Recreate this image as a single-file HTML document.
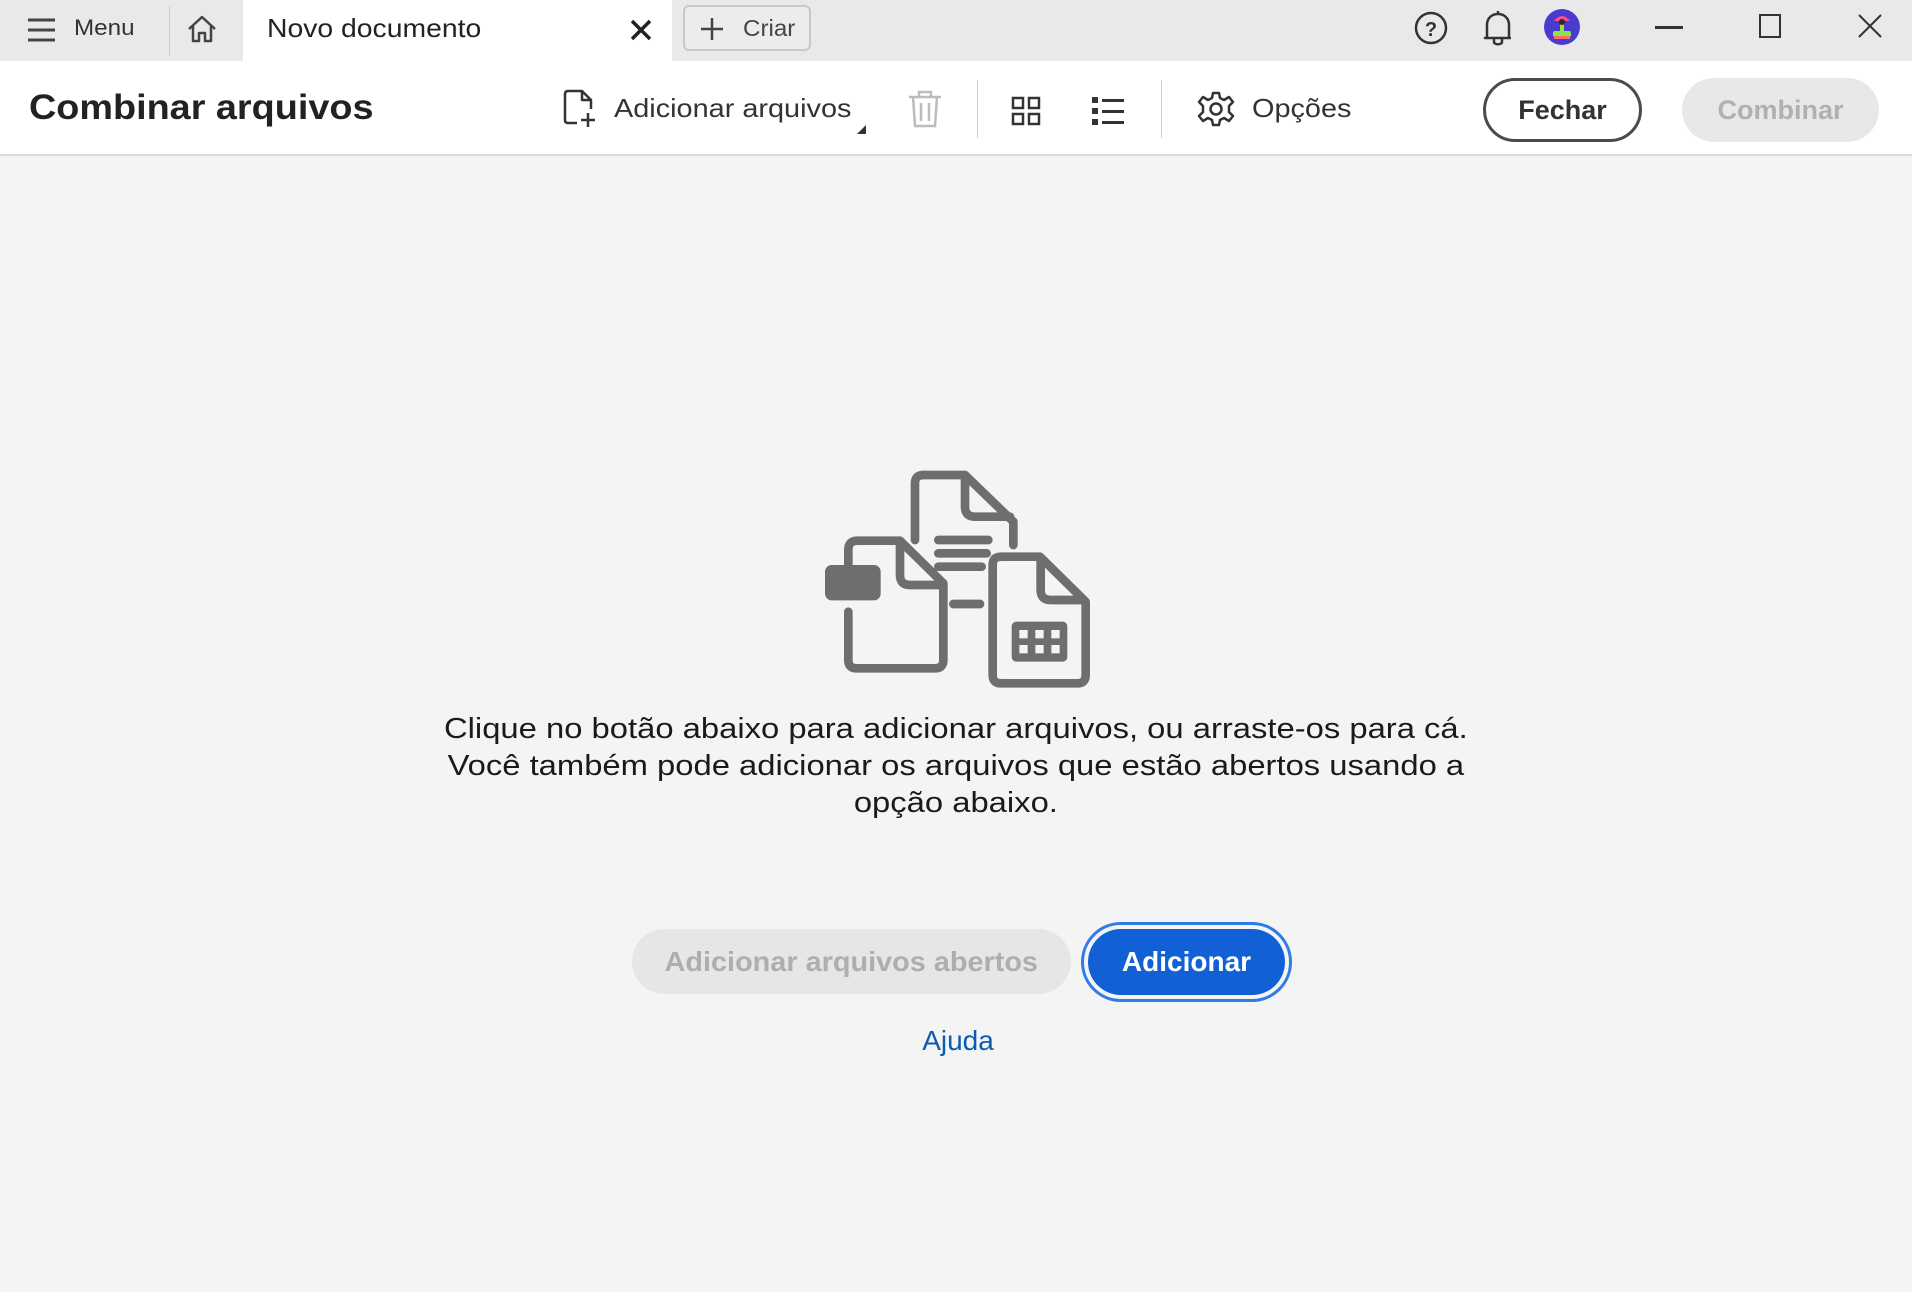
<!DOCTYPE html>
<html><head><meta charset="utf-8"><style>
*{margin:0;padding:0;box-sizing:border-box}
body{width:1912px;height:1292px;overflow:hidden;background:#f4f4f4;font-family:"Liberation Sans",sans-serif;position:relative;color:#222}
.a{position:absolute}
.sx{transform-origin:0 0;white-space:nowrap}
.top{left:0;top:0;width:1912px;height:61px;background:#e9e9e9}
.tab{left:243px;top:0;width:429px;height:61px;background:#fff}
.bar{left:0;top:61px;width:1912px;height:95px;background:#fff;border-bottom:2px solid #dcdcdc}
svg{position:absolute;overflow:visible}
.btn{position:absolute;border-radius:40px;display:flex;align-items:center;justify-content:center;font-weight:bold}
.c{text-align:center;width:1912px;left:0}
</style></head><body>
<div class="a top"></div>
<div class="a tab"></div>
<svg style="left:27px;top:17px" width="30" height="26"><path d="M1 3H28M1 13H28M1 23H28" stroke="#444" stroke-width="3"/></svg>
<div class="a sx" style="left:74px;top:15px;font-size:22px;color:#333;transform:scaleX(1.1)">Menu</div>
<div class="a" style="left:169px;top:6px;width:1px;height:50px;background:#ccc"></div>
<svg style="left:186px;top:13px" width="32" height="32" viewBox="0 0 32 32"><path d="M3 16L16 4L29 16M7 13V28H13V20H19V28H25V13" fill="none" stroke="#444" stroke-width="2.5" stroke-linejoin="round"/></svg>
<div class="a sx" style="left:267px;top:13px;font-size:26px;color:#222;transform:scaleX(1.09)">Novo documento</div>
<svg style="left:630px;top:19px" width="22" height="22"><path d="M2 2L20 20M20 2L2 20" stroke="#222" stroke-width="3.5"/></svg>
<div class="a" style="left:683px;top:5px;width:128px;height:46px;border:2px solid #c8c8c8;border-radius:6px;background:#ececec"></div>
<svg style="left:700px;top:17px" width="24" height="24"><path d="M12 1V23M1 12H23" stroke="#444" stroke-width="2.5"/></svg>
<div class="a sx" style="left:743px;top:15px;font-size:23px;color:#444;transform:scaleX(1.05)">Criar</div>
<svg style="left:1414px;top:11px" width="34" height="34" viewBox="0 0 34 34"><circle cx="17" cy="17" r="15" fill="none" stroke="#333" stroke-width="2.5"/><text x="17" y="25" text-anchor="middle" font-family="Liberation Sans" font-size="20" font-weight="bold" fill="#333">?</text></svg>
<svg style="left:1482px;top:10px" width="32" height="38" viewBox="0 0 32 38"><path d="M5 28V15C5 8 10 4 16 4S27 8 27 15V28H3H29M12 28V32C12 35 20 35 20 32V28M16 4V1" fill="none" stroke="#333" stroke-width="2.5" stroke-linejoin="round"/></svg>
<svg style="left:1544px;top:9px" width="36" height="36" viewBox="0 0 36 36"><circle cx="18" cy="18" r="18" fill="#4a3bd0"/><path d="M10 12Q18 2 26 12" fill="#ff4d8d"/><rect x="16" y="12" width="4" height="10" fill="#9be03c"/><rect x="9" y="22" width="18" height="6" rx="2" fill="#8ee04a"/><rect x="10" y="27" width="16" height="3" fill="#ff6a6a"/><circle cx="18" cy="13" r="3" fill="#2a2a2a"/></svg>
<div class="a" style="left:1655px;top:26px;width:28px;height:3px;background:#333"></div>
<div class="a" style="left:1759px;top:14px;width:22px;height:24px;border:2px solid #333"></div>
<svg style="left:1858px;top:14px" width="24" height="24"><path d="M1 1L23 23M23 1L1 23" stroke="#333" stroke-width="2"/></svg>
<div class="a bar"></div>
<div class="a sx" style="left:29px;top:88px;font-size:35px;font-weight:bold;color:#222;transform:scaleX(1.08)">Combinar arquivos</div>
<svg style="left:563px;top:89px" width="36" height="40" viewBox="0 0 36 40"><path d="M14 34H5C3 34 2 33 2 31V5C2 3 3 2 5 2H19L28 11V20M19 2V11H28M25 24V38M18 31H32" fill="none" stroke="#333" stroke-width="2.5" stroke-linejoin="round"/></svg>
<div class="a sx" style="left:614px;top:93px;font-size:26px;color:#333;transform:scaleX(1.11)">Adicionar arquivos</div>
<svg style="left:857px;top:125px" width="9" height="9"><path d="M9 0V9H0Z" fill="#333"/></svg>
<svg style="left:907px;top:90px" width="36" height="38" viewBox="0 0 36 38"><path d="M2 7H34M12 7V2H24V7M6 7L8 36H28L30 7M14 13V31M22 13V31" fill="none" stroke="#bcbcbc" stroke-width="2.5"/></svg>
<div class="a" style="left:977px;top:80px;width:1px;height:58px;background:#ccc"></div>
<svg style="left:1011px;top:96px" width="30" height="30" viewBox="0 0 30 30"><g fill="none" stroke="#333" stroke-width="2.5"><rect x="2" y="2" width="10" height="10"/><rect x="18" y="2" width="10" height="10"/><rect x="2" y="18" width="10" height="10"/><rect x="18" y="18" width="10" height="10"/></g></svg>
<svg style="left:1091px;top:96px" width="34" height="30" viewBox="0 0 34 30"><g fill="#333"><rect x="1" y="1" width="6" height="6"/><rect x="1" y="12" width="6" height="6"/><rect x="1" y="23" width="6" height="6"/><rect x="11" y="3" width="22" height="3"/><rect x="11" y="14" width="22" height="3"/><rect x="11" y="25" width="22" height="3"/></g></svg>
<div class="a" style="left:1161px;top:80px;width:1px;height:58px;background:#ccc"></div>
<svg style="left:1198px;top:91px" width="36" height="36" viewBox="0 0 36 36"><circle cx="18" cy="18" r="5.5" fill="none" stroke="#333" stroke-width="2.5"/><path d="M15 2H21L22 7L26 9L31 6L35 11L31 15V21L35 25L31 30L26 27L22 29L21 34H15L14 29L10 27L5 30L1 25L5 21V15L1 11L5 6L10 9L14 7Z" fill="none" stroke="#333" stroke-width="2.5" stroke-linejoin="round"/></svg>
<div class="a sx" style="left:1252px;top:93px;font-size:26px;color:#333;transform:scaleX(1.11)">Opções</div>
<div class="btn" style="left:1483px;top:78px;width:159px;height:64px;border:3px solid #4b4b4b;font-size:27px;color:#333">Fechar</div>
<div class="btn" style="left:1682px;top:78px;width:197px;height:64px;background:#e8e8e8;font-size:27px;color:#b0b0b0">Combinar</div>
<svg style="left:800px;top:450px" width="320" height="250" viewBox="0 0 960 750"><g fill="none" stroke="#6e6e6e" stroke-width="26" stroke-linecap="round" stroke-linejoin="round">
<path d="M345 270V100Q345 75 370 75H495L640 215V285"/><path d="M495 80V170Q495 200 525 200H630"/>
<path d="M415 270H565M415 310H560M415 350H545M460 462H540"/>
<path d="M145 345V300Q145 272 172 272H300L430 400V630Q430 655 405 655H170Q145 655 145 630V485"/><path d="M300 278V375Q300 405 330 405H420"/>
<path d="M578 345Q578 320 603 320H720L857 455V675Q857 700 832 700H603Q578 700 578 675Z"/><path d="M722 325V420Q722 450 752 450H850"/>
</g><rect x="75" y="345" width="167" height="106" rx="20" fill="#6e6e6e"/>
<rect x="635" y="515" width="167" height="120" rx="14" fill="#6e6e6e"/>
<g fill="#f4f4f4"><rect x="658" y="540" width="25" height="25"/><rect x="706" y="540" width="25" height="25"/><rect x="754" y="540" width="25" height="25"/><rect x="658" y="585" width="25" height="25"/><rect x="706" y="585" width="25" height="25"/><rect x="754" y="585" width="25" height="25"/></g></svg>
<div class="a c" style="top:711px;font-size:29px;line-height:37px;color:#1a1a1a;transform:scaleX(1.13);transform-origin:957px 0">Clique no botão abaixo para adicionar arquivos, ou arraste-os para cá.<br>Você também pode adicionar os arquivos que estão abertos usando a<br>opção abaixo.</div>
<div class="btn" style="left:632px;top:929px;width:439px;height:65px;background:#e6e6e6;font-size:28px;color:#aeaeae"><span style="display:inline-block;transform:scaleX(1.03)">Adicionar arquivos abertos</span></div>
<div class="a" style="left:1081px;top:922px;width:211px;height:80px;border:3px solid #2f7be8;border-radius:40px"></div>
<div class="btn" style="left:1088px;top:929px;width:197px;height:66px;background:#1160d6;font-size:28px;color:#fff">Adicionar</div>
<div class="a c" style="top:1025px;font-size:28px;color:#0b5bb5;left:2px">Ajuda</div>
</body></html>
